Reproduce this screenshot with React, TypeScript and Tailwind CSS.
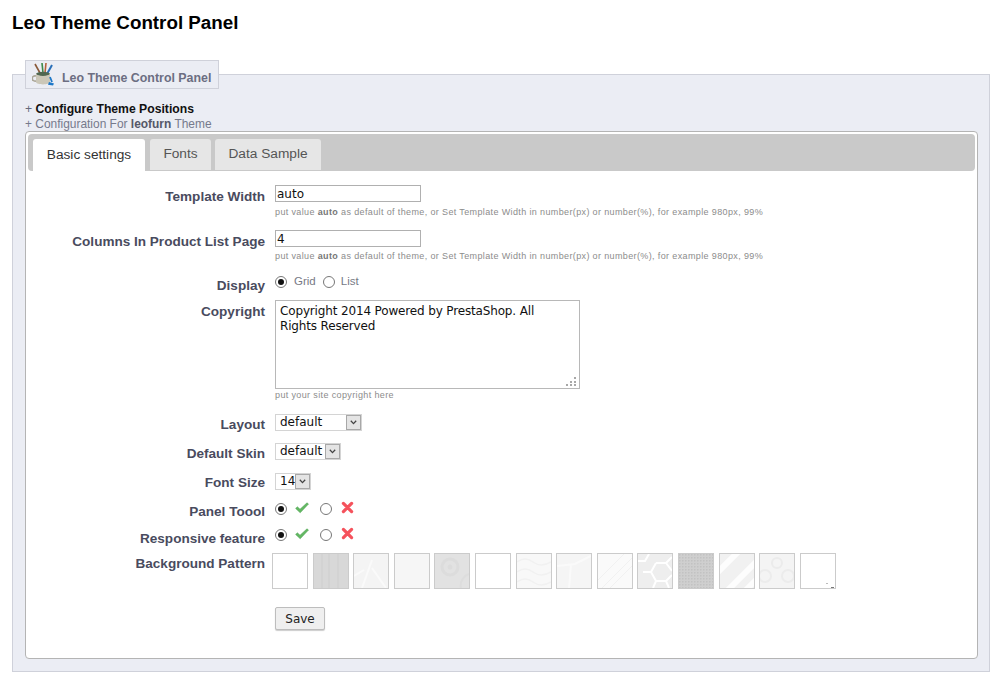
import React from "react";

function Label({ children, className = "" }: { children: React.ReactNode; className?: string }) {
  return (
    <div className={`w-[237px] shrink-0 text-right text-[13.55px] leading-[16px] font-bold text-[#494b5e] ${className}`}>
      {children}
    </div>
  );
}

function Help({ children }: { children: React.ReactNode }) {
  return <div className="text-[9px] leading-[11px] tracking-[0.37px] text-[#8c8c8c]">{children}</div>;
}

function Radio({ on }: { on?: boolean }) {
  return (
    <span className="flex h-[12px] w-[12px] shrink-0 items-center justify-center rounded-full border border-[#777] bg-white">
      {on && <span className="h-[6px] w-[6px] rounded-full bg-[#111]" />}
    </span>
  );
}

function Check() {
  return (
    <svg width="14" height="12" viewBox="0 0 14 12" className="mb-[2px] shrink-0">
      <path d="M0.6 6.4l1.8-1.6 2.6 2.4L12 0.8l1.5 1.2L5.2 10.8z" fill="#63b863" stroke="#4aa04f" strokeWidth="0.5" />
    </svg>
  );
}

function Cross() {
  return (
    <svg width="13" height="13" viewBox="0 0 13 13" className="mb-[3px] shrink-0">
      <path d="M2.4 2.4l8.2 8.2M10.6 2.4l-8.2 8.2" stroke="#f5525c" strokeWidth="3.2" strokeLinecap="round" />
    </svg>
  );
}

function Select({ value, widthClass }: { value: string; widthClass: string }) {
  return (
    <div className={`flex h-[17px] items-stretch border border-[#d4d4d4] bg-white ${widthClass}`}>
      <span className="flex-1 pl-[4px] font-['DejaVu_Sans',sans-serif] text-[12px] leading-[15px] text-[#111]">{value}</span>
      <span className="flex w-[15px] items-center justify-center border border-[#a8a8a8] bg-[#e4e4e4]">
        <svg width="7" height="5" viewBox="0 0 7 5">
          <path d="M0.8 0.8L3.5 3.6 6.2 0.8" fill="none" stroke="#444" strokeWidth="1.3" />
        </svg>
      </span>
    </div>
  );
}

function Swatch({ children, bg = "bg-white" }: { children?: React.ReactNode; bg?: string }) {
  return (
    <div className={`h-[36px] w-[36px] shrink-0 overflow-hidden border border-[#cbcbcb] ${bg}`}>
      {children && (
        <svg width="34" height="34" viewBox="0 0 34 34">
          {children}
        </svg>
      )}
    </div>
  );
}

function Swatches() {
  return (
    <div className="ml-[-3px] flex gap-[4.6px]">
      <Swatch />
      <Swatch bg="bg-[#d8d8d8]">
        <path d="M8 0v34M15 0v34M24 0v34" stroke="#d3d3d3" strokeWidth="2" />
      </Swatch>
      <Swatch bg="bg-[#f4f4f4]">
        <path d="M8 34L18 6M18 14l14 20M0 22l10-6" stroke="#fafafa" strokeWidth="2" fill="none" />
      </Swatch>
      <Swatch bg="bg-[#f6f6f6]" />
      <Swatch bg="bg-[#e2e2e2]">
        <circle cx="15" cy="13" r="8" fill="none" stroke="#dcdcdc" strokeWidth="3" />
        <circle cx="15" cy="13" r="2.5" fill="#dcdcdc" />
        <path d="M26 34a12 12 0 0 1 8-14" stroke="#dddddd" strokeWidth="2" fill="none" />
      </Swatch>
      <Swatch />
      <Swatch bg="bg-[#f8f8f8]">
        <path d="M0 8q8-6 16 0t18 0M0 18q8-6 16 0t18 0M0 28q8-6 16 0t18 0" stroke="#f1f1f1" strokeWidth="1.5" fill="none" />
      </Swatch>
      <Swatch bg="bg-[#f5f5f5]">
        <path d="M0 12l18-2 16-8M14 11l-2 23" stroke="#fafafa" strokeWidth="2" fill="none" />
      </Swatch>
      <Swatch bg="bg-[#fafafa]">
        <path d="M4 34L34 4M12 34L34 12M0 26L26 0" stroke="#f1f1f1" strokeWidth="1" fill="none" />
      </Swatch>
      <Swatch bg="bg-[#eeeeee]">
        <path d="M0 7h7l4-7M18 9h10l6-6M18 9l-5 9 5 9h10l6-6M28 9l6 8M13 18H5M18 27l-3 7M28 27l3 7" stroke="#fff" strokeWidth="2" fill="none" />
      </Swatch>
      <Swatch bg="bg-[#cfcfcf]">
        <defs>
          <pattern id="dots" width="3" height="3" patternUnits="userSpaceOnUse">
            <rect width="1.5" height="1.5" fill="#c2c2c2" />
          </pattern>
        </defs>
        <rect width="34" height="34" fill="url(#dots)" />
      </Swatch>
      <Swatch bg="bg-[#f1f1f1]">
        <path d="M-4 20L20 -4M6 38L38 6M22 40L40 22" stroke="#fdfdfd" strokeWidth="6" fill="none" />
      </Swatch>
      <Swatch bg="bg-[#f4f4f4]">
        <circle cx="17" cy="9" r="5" fill="none" stroke="#ebebeb" strokeWidth="2" />
        <circle cx="5" cy="22" r="6" fill="none" stroke="#ececec" strokeWidth="2" />
        <circle cx="28" cy="22" r="6" fill="none" stroke="#ececec" strokeWidth="2" />
      </Swatch>
      <Swatch>
        <rect x="25" y="29" width="2" height="1" fill="#bbb" />
        <rect x="30" y="33" width="3" height="1" fill="#777" />
      </Swatch>
    </div>
  );
}

function Mug() {
  return (
    <svg width="24" height="24" viewBox="0 0 24 24">
      <path d="M3 1l5 9" stroke="#8a5a3a" strokeWidth="1.6" />
      <path d="M10 0l1 10" stroke="#3c8a4a" strokeWidth="1.6" />
      <path d="M14 0l-1 10" stroke="#b5623c" strokeWidth="1.6" />
      <path d="M20 2l-5 9" stroke="#2a6fb8" strokeWidth="2" />
      <ellipse cx="11" cy="11" rx="7" ry="2.2" fill="#4f6650" />
      <path d="M4 11v8c0 3.2 14 3.2 14 0v-8c-2 2.5-12 2.5-14 0z" fill="#cbc7b8" />
      <path d="M4 13c-5-1-5 6 0 5" fill="none" stroke="#a9a596" strokeWidth="1.6" />
      <path d="M17 19l5 1.5-1 2-5-.8z" fill="#1e78c8" />
      <path d="M18 14l2 5" stroke="#1e78c8" strokeWidth="1.8" />
    </svg>
  );
}

export default function App() {
  return (
    <div className="h-[684px] w-[1000px] overflow-hidden bg-white font-['Liberation_Sans',Arial,sans-serif]">
      <h1 className="pl-[12px] pt-[12px] text-[18.8px] leading-[21px] font-bold text-black">Leo Theme Control Panel</h1>

      <div className="ml-[12px] mt-[41px] h-[598px] w-[978px] border border-[#cfd1da] bg-[#ebedf4] pl-[12px] pr-[12px]">
        <div className="mt-[-15px] flex h-[29px] w-[194px] items-end border border-[#cfd1da] bg-[#ebedf4] pb-[2px] pl-[6px]">
          <span className="mb-[-1px] mr-[6px]"><Mug /></span>
          <span className="pb-[1px] text-[12.4px] leading-[14px] font-bold text-[#6c6e82]">Leo Theme Control Panel</span>
        </div>

        <div className="mt-[13px] text-[12.2px] leading-[14px] text-[#666a7c]">
          + <span className="font-bold text-[#111]">Configure Theme Positions</span>
        </div>
        <div className="mt-px text-[11.95px] leading-[14px] text-[#767a8c]">
          + Configuration For <span className="font-bold text-[#555869]">leofurn</span> Theme
        </div>

        <div className="h-[528px] w-[953px] rounded-[4px] border border-[#b4b4b4] bg-white p-[2px]">
          <div className="flex h-[37px] rounded-[4px] bg-[#c9c9c9] pl-[5px] pt-[5px]">
            <div className="flex h-[32px] w-[112px] items-center justify-center rounded-t-[3px] bg-white text-[13.7px] text-[#333]">Basic settings</div>
            <div className="ml-[5px] flex h-[31px] w-[61px] items-center justify-center rounded-t-[3px] bg-[#e6e6e6] text-[13.7px] text-[#555]">Fonts</div>
            <div className="ml-[4px] flex h-[31px] w-[106px] items-center justify-center rounded-t-[3px] bg-[#e6e6e6] text-[13.7px] text-[#555]">Data Sample</div>
          </div>

          <div className="flex flex-col pt-[14px]">
            <div className="flex gap-[10px]">
              <Label className="pt-[4px]">Template Width</Label>
              <div className="flex flex-col">
                <div className="h-[17px] w-[146px] border border-[#b0b0b0] bg-white pl-[1px] font-['DejaVu_Sans',sans-serif] text-[12px] leading-[16px] text-[#111]">auto</div>
                <div className="mt-[5px]"><Help>put value <b className="text-[#777]">auto</b> as default of theme, or Set Template Width in number(px) or number(%), for example 980px, 99%</Help></div>
              </div>
            </div>

            <div className="mt-[12px] flex gap-[10px]">
              <Label className="pt-[4px]">Columns In Product List Page</Label>
              <div className="flex flex-col">
                <div className="h-[17px] w-[146px] border border-[#b0b0b0] bg-white pl-[1px] font-['DejaVu_Sans',sans-serif] text-[12px] leading-[16px] text-[#111]">4</div>
                <div className="mt-[4px]"><Help>put value <b className="text-[#777]">auto</b> as default of theme, or Set Template Width in number(px) or number(%), for example 980px, 99%</Help></div>
              </div>
            </div>

            <div className="mt-[13px] flex gap-[10px]">
              <Label className="pt-[3px]">Display</Label>
              <div className="flex h-[13px] items-center text-[11.5px] text-[#777a85]">
                <Radio on />
                <span className="ml-[7px]">Grid</span>
                <span className="ml-[7px]"><Radio /></span>
                <span className="ml-[6px]">List</span>
              </div>
            </div>

            <div className="mt-[6px] flex gap-[10px]">
              <Label className="pt-[4px]">Copyright</Label>
              <div className="flex flex-col">
                <div className="relative h-[89px] w-[305px] border border-[#b8b8b8] bg-white pl-[4px] pr-[14px] pt-[3px] font-['DejaVu_Sans',sans-serif] text-[12px] leading-[15px] tracking-[-0.15px] text-[#111]">
                  Copyright 2014 Powered by PrestaShop. All Rights Reserved
                  <svg width="12" height="10" viewBox="0 0 12 10" className="absolute bottom-[2px] right-[2px]">
                    <path d="M9 1h2v2H9zM5 5h2v2H5zM9 5h2v2H9zM1 8h2v2H1zM5 8h2v2H5zM9 8h2v2H9z" fill="#a8a8a8" />
                  </svg>
                </div>
                <div className="mt-[1px]"><Help>put your site copyright here</Help></div>
              </div>
            </div>

            <div className="mt-[13px] flex gap-[10px]">
              <Label className="pt-[3px]">Layout</Label>
              <Select value="default" widthClass="w-[87px]" />
            </div>

            <div className="mt-[10px] flex gap-[10px]">
              <Label className="pt-[3px]">Default Skin</Label>
              <Select value="default" widthClass="w-[66px]" />
            </div>

            <div className="mt-[11px] flex gap-[10px]">
              <Label className="pt-[2px]">Font Size</Label>
              <Select value="14" widthClass="w-[36px]" />
            </div>

            <div className="mt-[11px] flex gap-[10px]">
              <Label className="pt-[2px]">Panel Toool</Label>
              <div className="flex h-[14px] items-center">
                <Radio on />
                <span className="ml-[8px] flex"><Check /></span>
                <span className="ml-[11px]"><Radio /></span>
                <span className="ml-[9px] flex"><Cross /></span>
              </div>
            </div>

            <div className="mt-[8px] flex gap-[10px]">
              <Label className="pt-[3px]">Responsive feature</Label>
              <div className="flex h-[14px] items-center">
                <Radio on />
                <span className="ml-[8px] flex"><Check /></span>
                <span className="ml-[11px]"><Radio /></span>
                <span className="ml-[9px] flex"><Cross /></span>
              </div>
            </div>

            <div className="mt-[6px] flex gap-[10px]">
              <Label className="pt-[3px]">Background Pattern</Label>
              <Swatches />
            </div>

            <div className="ml-[247px] mt-[18px]">
              <div className="flex h-[23px] w-[50px] items-center justify-center rounded-[2px] border border-[#bdbdbd] bg-[#efefef] font-['DejaVu_Sans',sans-serif] text-[12px] text-[#222] shadow-[0_1px_1px_rgba(0,0,0,0.2)]">Save</div>
            </div>
          </div>
        </div>
      </div>
    </div>
  );
}
